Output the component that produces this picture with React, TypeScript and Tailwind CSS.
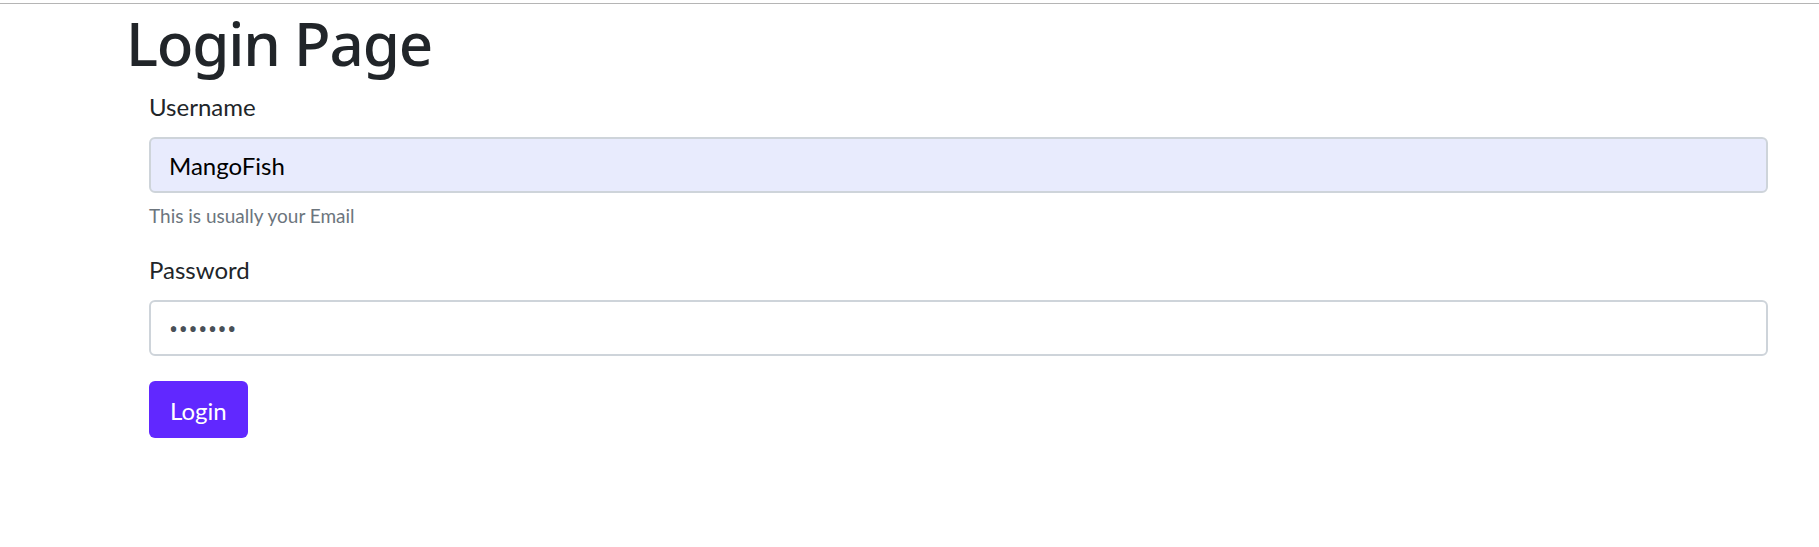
import React from "react";

export default function App() {
  return (
    <div
      className="min-h-screen bg-white text-[#212529]"
      style={{ fontFamily: 'Lato, "Noto Sans", sans-serif' }}
    >
      <div className="h-[4px] border-b border-[#b5b5b5]" />
      <div className="pl-[126px] pr-[51px]">
        <h1
          className="mt-[3px] mb-[10px] text-[60px] leading-[72px] font-medium tracking-[-1.2px]"
          style={{ fontFamily: '"Noto Sans", sans-serif' }}
        >
          Login Page
        </h1>
        <form className="pl-[23px]" onSubmit={(e) => e.preventDefault()}>
          <div className="mb-[21px]">
            <label className="block mb-[12px] text-[24px] leading-[36px]">Username</label>
            <input
              type="text"
              readOnly
              value="MangoFish"
              className="block w-full h-[56px] rounded-[6px] border-2 border-[#ced4da] bg-[#e8ebfd] px-[18px] text-[24px] text-black outline-none"
            />
            <div className="mt-[7px] text-[19px] leading-[31px] text-[#6c757d]">This is usually your Email</div>
          </div>
          <div className="mb-[25px]">
            <label className="block mb-[12px] text-[24px] leading-[36px]">Password</label>
            <input
              type="password"
              readOnly
              value="1234567"
              className="block w-full h-[56px] rounded-[6px] border-2 border-[#ced4da] bg-white px-[18px] text-[24px] tracking-[0.7px] text-[#495057] outline-none"
              style={{ fontFamily: '"Noto Sans", sans-serif' }}
            />
          </div>
          <button
            type="submit"
            className="h-[57px] px-[21px] pt-[2px] rounded-[6px] bg-[#6128ff] text-white text-[24px] leading-[36px]"
          >
            Login
          </button>
        </form>
      </div>
    </div>
  );
}
